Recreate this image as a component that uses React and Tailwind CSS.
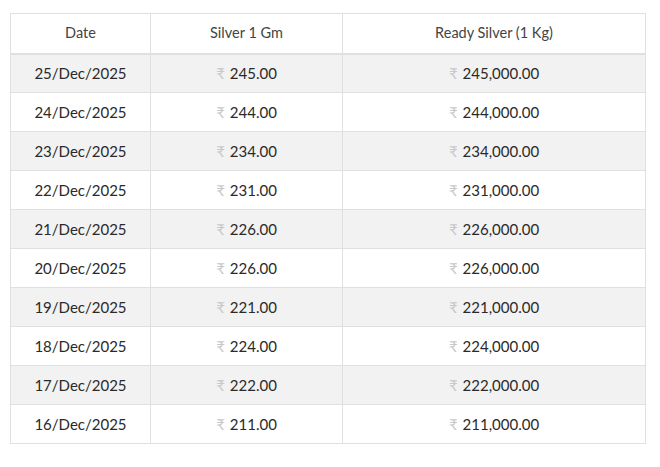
import React from 'react';

const rows = [
  ['25/Dec/2025', '245.00', '245,000.00'],
  ['24/Dec/2025', '244.00', '244,000.00'],
  ['23/Dec/2025', '234.00', '234,000.00'],
  ['22/Dec/2025', '231.00', '231,000.00'],
  ['21/Dec/2025', '226.00', '226,000.00'],
  ['20/Dec/2025', '226.00', '226,000.00'],
  ['19/Dec/2025', '221.00', '221,000.00'],
  ['18/Dec/2025', '224.00', '224,000.00'],
  ['17/Dec/2025', '222.00', '222,000.00'],
  ['16/Dec/2025', '211.00', '211,000.00'],
];

const Price = ({ value }) => (
  <span>
    <span className="text-[15px] text-[#c8c8c8] mr-[5px]">₹</span>
    {value}
  </span>
);

const App = () => {
  return (
    <div className="w-[660px] h-[467px] bg-white pt-[13px] pl-[10px] font-['Lato','Open_Sans',sans-serif]">
      <table className="w-[635px] border-collapse border border-[#e0e0e0] table-fixed">
        <colgroup>
          <col className="w-[140px]" />
          <col className="w-[192px]" />
          <col className="w-[303px]" />
        </colgroup>
        <thead>
          <tr className="h-[40px] text-[14.5px] text-[#444]">
            <th className="font-normal border border-[#e0e0e0] border-b-2">Date</th>
            <th className="font-normal border border-[#e0e0e0] border-b-2">Silver 1 Gm</th>
            <th className="font-normal border border-[#e0e0e0] border-b-2">Ready Silver (1 Kg)</th>
          </tr>
        </thead>
        <tbody>
          {rows.map((r, i) => (
            <tr
              key={r[0]}
              className={`h-[39px] text-[15px] text-[#2a2a2a] ${i % 2 === 0 ? 'bg-[#f2f2f2]' : 'bg-white'}`}
            >
              <td className="text-center border border-[#e0e0e0]">{r[0]}</td>
              <td className="text-center border border-[#e0e0e0]"><Price value={r[1]} /></td>
              <td className="text-center border border-[#e0e0e0]"><Price value={r[2]} /></td>
            </tr>
          ))}
        </tbody>
      </table>
    </div>
  );
};

export default App;
